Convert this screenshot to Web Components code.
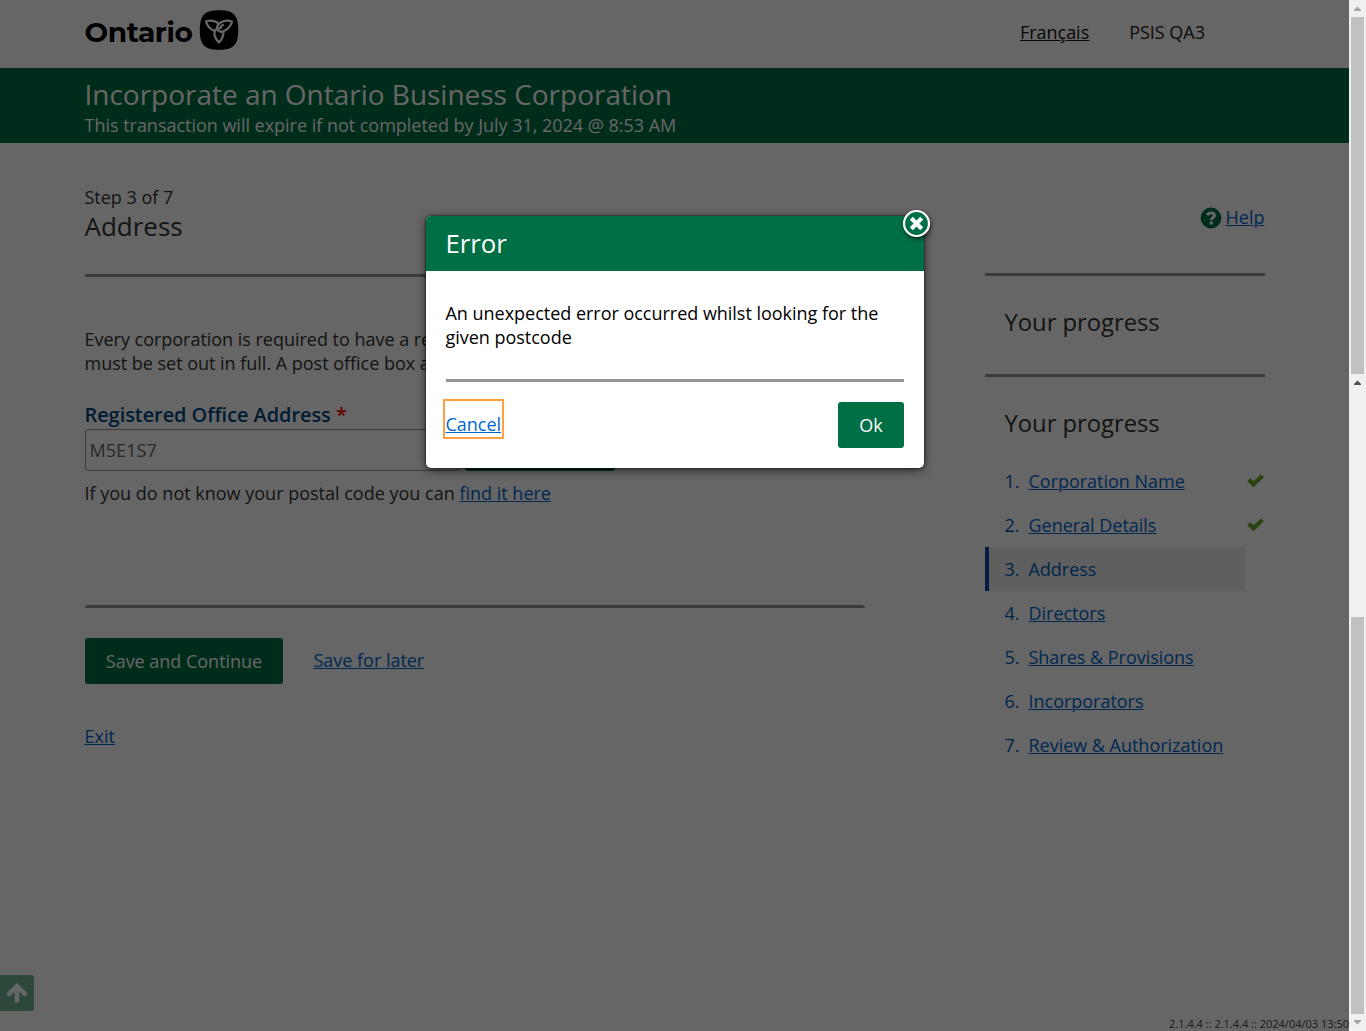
<!DOCTYPE html>
<html lang="en">
<head>
<meta charset="utf-8">
<title>Incorporate an Ontario Business Corporation</title>
<style>
html,body{margin:0;height:100%;overflow:hidden}
body{font:18px/24px "Open Sans","Noto Sans",sans-serif;color:#333;background:#fff;letter-spacing:-.02px;text-indent:-.5px}
</style>
</head>
<body>
<incorporation-app></incorporation-app>
<script>
const make = (name, html) => {
  const t = document.createElement('template');
  t.innerHTML = '<style>*{box-sizing:border-box}</style>' + html;
  customElements.define(name, class extends HTMLElement {
    constructor() {
      super();
      this.attachShadow({ mode: 'open' }).appendChild(t.content.cloneNode(true));
    }
  });
};

make('text-link', `<style>
:host{display:inline;color:#0066cc}
a{color:inherit;text-decoration:underline;text-decoration-thickness:1px;text-underline-offset:1px;white-space:nowrap}
</style><a><slot></slot></a>`);

make('green-button', `<style>
:host{display:block;height:46px;border-radius:3px;background:#006f45;color:#fff}
button{font:inherit;color:inherit;background:none;border:0;padding:0;width:100%;height:100%;display:flex;align-items:center;justify-content:center;letter-spacing:inherit}
</style><button><slot></slot></button>`);

make('rule-line', `<style>:host{display:block;height:3px;background:#949494;border-radius:var(--rule-radius,0)}</style>`);

make('site-header', `<style>
:host{display:flex;height:68px;padding:0 144px 0 85px;justify-content:space-between}
.logo{display:block;margin-top:8px}
nav{display:flex;gap:40.500px;padding-top:20px}
span{white-space:nowrap}
nav{color:#222}
text-link{color:#111}
.word{font:700 28px/34px Montserrat,"Open Sans",sans-serif;color:#000;letter-spacing:-.4px;margin-top:15px;width:107px}
.brand{display:flex;gap:7px}
</style>
<div class="brand"><span class="word">Ontario</span>
<svg class="logo" width="40" height="44" viewBox="0 0 40 44"><path fill="#000" d="M20 2.200C34.500 2.200 39.200 7 39.200 22S34.500 41.800 20 41.800 .800 37 .800 22 5.500 2.200 20 2.200Z"/>
<g fill="none" stroke="#fff" stroke-width="2.300" stroke-linejoin="round" stroke-linecap="round"><path d="M16 23.200C11 21.300 8 17.500 7 13.500C11.500 11.500 17 13 20 15.600C23 13 28.500 11.500 33 13.500C32 17.500 29 21.300 24.500 23.300C24.500 28 23 31.500 20 34.500C17 31.500 15 28 15.500 23.800C16 21.300 18 20.500 20.800 20.200"/><path d="M20 15.600C17.500 18 17.500 21 20 23C21.500 24 23 23.900 24.500 23.300M21.700 20C21.600 18.500 22.500 17.500 24 17"/></g></svg></div>
<nav><text-link>Français</text-link><span>PSIS QA3</span></nav>`);

make('title-banner', `<style>
:host{display:block;height:75px;padding:8px 85px 0;background:#006f45;color:#fff}
h1{font-weight:400;font-size:28px;line-height:36px;margin:0 0 1px;white-space:nowrap}
p{margin:0;white-space:nowrap}
</style><h1><slot></slot></h1><p><slot name="note"></slot></p>`);

make('address-step', `<style>
:host{display:flex;flex-direction:column;width:780px;padding-top:42px}
h2{font-weight:400;font-size:26px;line-height:34px;margin:0 0 31px}
.copy{margin:50px 0 28px -.5px;text-indent:0;white-space:nowrap}
label{font-weight:600;font-size:19.900px;color:#00467f;margin-bottom:2px;white-space:nowrap}
b{font-weight:600;color:#f00}
.row{display:flex;gap:5px;align-items:flex-end}
.input{width:375px;height:42px;border:1px solid #949494;border-radius:3px;padding:8px 4px;color:#666;letter-spacing:.05px}
.row green-button{width:150px;height:42px}
.hint{margin:10px 0 100px;white-space:nowrap;letter-spacing:0}
rule-line{--rule-radius:3px 3px 0 0}
.actions{display:flex;gap:31px;margin-top:30px;align-items:center;margin-bottom:40px}
.actions green-button{width:198px}
.actions text-link{margin-top:-2px}
</style>
<div>Step 3 of 7</div><h2>Address</h2><rule-line style="--rule-radius:0"></rule-line>
<div class="copy">Every corporation is required to have a re<br>must be set out in full. A post office box a</div>
<label>Registered Office Address <b>*</b></label>
<div class="row"><div class="input">M5E1S7</div><green-button></green-button></div>
<div class="hint">If you do not know your postal code you can <text-link>find it here</text-link></div>
<rule-line></rule-line>
<div class="actions"><green-button>Save and Continue</green-button><text-link>Save for later</text-link></div>
<div><text-link>Exit</text-link></div>`);

make('progress-item', `<style>
:host{display:flex;height:44px;align-items:center;color:#005eb8;width:280px;padding-left:20px}
:host([current]){background:#ededed;width:260px;border-left:4px solid #0f47af;padding-left:16px}
.n{width:24px}.s{flex:1}
svg{display:none;margin-top:-2px}
:host([done]) svg{display:block}
text-link{color:inherit}
</style><span class="n"><slot name="n"></slot></span><span class="s"><slot></slot></span>
<svg width="18" height="18" viewBox="0 0 18 18"><path d="M1.800 8.800L6.500 13.200L15.400 4.800" fill="none" stroke="#66a828" stroke-width="4.300"/></svg>`);

make('progress-panel', `<style>
:host{display:flex;flex-direction:column;width:280px;padding-top:61px}
.help{display:flex;justify-content:flex-end;gap:4px;align-items:center;height:26px;padding-right:.6px}
.help svg{margin-top:1px}
h3{font-weight:400;font-size:23.8px;line-height:34px;margin:0;padding-left:20px}
</style>
<div class="help"><svg width="22" height="22" viewBox="0 0 22 22"><circle cx="11" cy="11" r="10.400" fill="#006f45"/><path d="M7.300 8.300C8.300 5 14.500 5.100 14.400 8.500C14.400 10.500 11.300 10.700 11.300 13.200" fill="none" stroke="#fff" stroke-width="3"/><rect x="9.700" y="14.500" width="3.200" height="3" fill="#fff"/></svg><text-link>Help</text-link></div>
<rule-line style="margin-top:43px"></rule-line>
<h3 style="margin:29px 0 35px">Your progress</h3>
<rule-line></rule-line>
<h3 style="margin:29px 0 19px">Your progress</h3>
<progress-item done><span slot="n">1.</span><text-link>Corporation Name</text-link></progress-item>
<progress-item done><span slot="n">2.</span><text-link>General Details</text-link></progress-item>
<progress-item current><span slot="n">3.</span>Address</progress-item>
<progress-item><span slot="n">4.</span><text-link>Directors</text-link></progress-item>
<progress-item><span slot="n">5.</span><text-link>Shares &amp; Provisions</text-link></progress-item>
<progress-item><span slot="n">6.</span><text-link>Incorporators</text-link></progress-item>
<progress-item><span slot="n">7.</span><text-link>Review &amp; Authorization</text-link></progress-item>`);

make('page-footer', `<style>
:host{display:flex;justify-content:space-between;align-items:flex-end;height:56px}
.up{width:34px;height:36px;background:#6fb395;border-radius:0 3px 3px 0;margin-bottom:20px;display:flex;align-items:center;justify-content:center}
.v{font-size:11px;line-height:14px;white-space:nowrap;color:#444;letter-spacing:0;text-indent:0}
</style><div class="up"><svg width="22" height="22" viewBox="0 0 22 22"><path d="M3.200 11.800L11 4L18.800 11.800M11 5V18.500" fill="none" stroke="#fff" stroke-width="4.600" stroke-linecap="round" stroke-linejoin="miter"/></svg></div>
<span class="v">2.1.4.4 :: 2.1.4.4 :: 2024/04/03 13:50</span>`);

make('error-dialog', `<style>
:host{display:flex;flex-direction:column;position:absolute;left:426px;top:216px;width:498px;height:252px;background:#fff;border-radius:5px;box-shadow:0 2px 10px rgba(0,0,0,.65),0 0 2px #000;color:#000}
header{height:55px;background:#006f45;border-radius:5px 0 0 0;color:#fff;font-size:25.8px;line-height:55px;padding:0 20px}
.close{position:absolute;right:-8px;top:-8px;filter:drop-shadow(1px 2px 2px rgba(0,0,0,.6))}
p{margin:30px 20px 30px 19.500px;text-indent:0;white-space:nowrap}
rule-line{margin:0 20px}
footer{display:flex;justify-content:space-between;padding:18px 20px 0 17px;align-items:flex-start}
.cancel{border:2px solid #ff9f40;width:61px;height:40px;padding:11px 1px 0;line-height:24px;margin-top:-1px}
green-button{width:66px;margin-top:2px}
</style>
<header><slot name="title"></slot></header>
<svg class="close" width="32" height="32" viewBox="0 0 32 32"><circle cx="16.500" cy="15.500" r="12.500" fill="#006f45" stroke="#fff" stroke-width="2.200"/><path d="M12.800 11.800L20.200 19.200M20.200 11.800L12.800 19.200" stroke="#fff" stroke-width="4.200" stroke-linecap="square"/></svg>
<p><slot></slot></p><rule-line></rule-line>
<footer><div class="cancel"><text-link>Cancel</text-link></div><green-button>Ok</green-button></footer>`);

make('scroll-bars', `<style>
:host{display:flex;flex-direction:column;width:17px;height:1031px;background:#f0f0f0;align-items:center}
div{width:13px;background:#c1c1c1}
svg{display:block}
</style>
<svg width="13" height="17"><path d="M3 11V10L6.500 6.500L10 10V11Z" fill="#a3a3a3"/></svg>
<div style="height:357px"></div>
<svg width="13" height="17"><path d="M3 11V10L6.500 6.500L10 10V11Z" fill="#505050"/></svg>
<div style="height:397px;margin-top:226px"></div>
<svg width="13" height="17"><path d="M3 6V7L6.500 10.500L10 7V6Z" fill="#a3a3a3"/></svg>`);

make('incorporation-app', `<style>
:host{display:flex;width:1366px;height:1031px;position:relative;overflow:hidden}
.page{width:1349px;display:flex;flex-direction:column}
main{display:flex;justify-content:space-between;padding:0 84px 0 85px;flex:1}
.veil{position:absolute;left:0;top:0;width:1349px;height:1031px;background:rgba(0,0,0,.6)}
</style>
<div class="page"><site-header></site-header>
<title-banner>Incorporate an Ontario Business Corporation<span slot="note">This transaction will expire if not completed by July 31, 2024 @ 8:53 AM</span></title-banner>
<main><address-step></address-step><progress-panel></progress-panel></main>
<page-footer></page-footer></div>
<scroll-bars></scroll-bars>
<div class="veil"></div>
<error-dialog><span slot="title">Error</span>An unexpected error occurred whilst looking for the<br>given postcode</error-dialog>`);
</script>
</body>
</html>
